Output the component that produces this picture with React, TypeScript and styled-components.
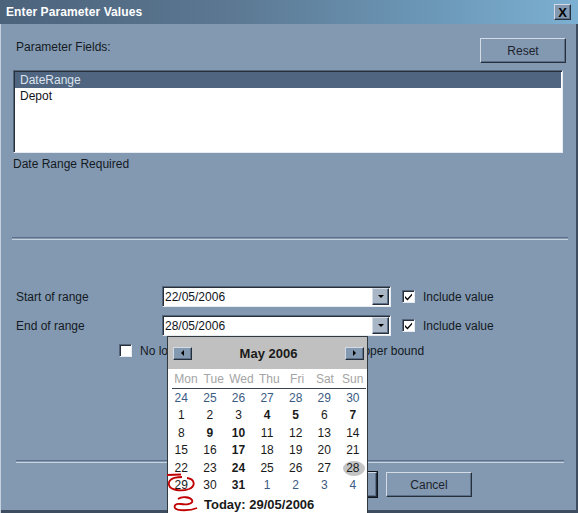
import React from 'react'
import styled, { createGlobalStyle, css } from 'styled-components'

const GlobalStyle = createGlobalStyle`
  html, body {
    margin: 0;
    padding: 0;
    background: #8399b2;
  }
  body {
    font-family: "Liberation Sans", Arial, sans-serif;
    font-size: 12px;
    color: #141a22;
  }
`

const bevel = css`
  border-style: solid;
  border-width: 1px;
  border-color: #d2dbe6 #26303c #26303c #d2dbe6;
  box-shadow: inset -1px -1px 0 #5d7087;
`

const sunken = css`
  border-style: solid;
  border-width: 1px;
  border-color: #56667a #e6ecf2 #e6ecf2 #56667a;
  box-shadow: inset 1px 1px 0 #26303c;
`

const Window = styled.div`
  width: 578px;
  height: 513px;
  box-sizing: border-box;
  background: #8399b2;
  box-shadow: inset 1px 0 0 #c5d1de, inset -2px -3px 0 #3e4d60;
  display: flex;
  flex-direction: column;
  overflow: hidden;
  position: relative;
`

const TitleBar = styled.div`
  height: 24px;
  flex: none;
  display: flex;
  align-items: center;
  justify-content: space-between;
  padding: 0 7px 0 6px;
  background: linear-gradient(to right, #4c637c 0%, #5c7892 40%, #6c98b8 75%, #7cb0d2 100%);
`

const Title = styled.span`
  color: #ffffff;
  font-weight: bold;
  font-size: 12px;
  letter-spacing: 0.1px;
`

const CloseButton = styled.div`
  ${bevel};
  width: 15px;
  height: 14px;
  background: #8399b2;
  display: flex;
  align-items: center;
  justify-content: center;
  font-weight: bold;
  font-size: 13px;
  color: #000;
  line-height: 1;
`

const TopRow = styled.div`
  display: flex;
  justify-content: space-between;
  align-items: flex-start;
  margin: 14px 12px 0 16px;
`

const Label = styled.span`
  padding-top: 2px;
  white-space: nowrap;
`

const Button = styled.div<{ $default?: boolean }>`
  ${bevel};
  width: 84px;
  height: 23px;
  display: flex;
  align-items: center;
  justify-content: center;
  background: #8399b2;
  color: #1d232c;
  font-size: 12px;
  ${p => p.$default && css`
    outline: 1px solid #10161e;
  `}
`

const ListBox = styled.div`
  ${sunken};
  height: 79px;
  margin: 7px 15px 0 13px;
  background: #ffffff;
  padding: 1px 1px;
`

const ListItem = styled.div<{ $selected?: boolean }>`
  height: 16px;
  line-height: 16px;
  padding-left: 5px;
  color: ${p => (p.$selected ? '#dce4ee' : '#10141a')};
  background: ${p => (p.$selected ? '#4f6580' : 'transparent')};
`

const Status = styled.div`
  margin: 4px 0 0 13px;
  height: 14px;
  line-height: 14px;
`

const Separator = styled.div<{ $top: number; $left: number; $right: number }>`
  margin: ${p => p.$top}px ${p => p.$right}px 0 ${p => p.$left}px;
  height: 1px;
  border-top: 1px solid #5b6f88;
  border-bottom: 1px solid #c6d2de;
  flex: none;
`

const RangeRow = styled.div<{ $top: number }>`
  display: flex;
  align-items: center;
  margin: ${p => p.$top}px 0 0 16px;
  height: 21px;
`

const RangeLabel = styled.span`
  width: 146px;
`

const Combo = styled.div`
  ${sunken};
  position: relative;
  width: 227px;
  height: 19px;
  background: #ffffff;
  display: flex;
  align-items: center;
  box-sizing: content-box;
`

const ComboText = styled.span`
  flex: 1;
  padding-left: 2px;
  color: #10141a;
`

const DropButton = styled.div`
  ${bevel};
  width: 15px;
  height: 15px;
  margin-right: 1px;
  background: #a9b6c6;
  display: flex;
  align-items: center;
  justify-content: center;
`

const CheckBox = styled.div<{ $gap: number }>`
  ${sunken};
  width: 11px;
  height: 11px;
  background: #ffffff;
  margin-left: ${p => p.$gap}px;
  display: flex;
  align-items: center;
  justify-content: center;
  flex: none;
`

const CheckLabel = styled.span`
  margin-left: 8px;
  white-space: nowrap;
`

const BoundRow = styled.div`
  display: flex;
  align-items: center;
  margin: 8px 0 0 104px;
  height: 13px;
`

const ButtonRow = styled.div`
  display: flex;
  gap: 9px;
  margin: 9px 0 0 291px;
`

const Popup = styled.div`
  position: absolute;
  top: 100%;
  left: 4px;
  margin-top: 1px;
  width: 199px;
  border: 1px solid #303840;
  background: #ffffff;
  z-index: 5;
  font-size: 12px;
`

const CalHeader = styled.div`
  height: 32px;
  background: #c0c0c0;
  display: flex;
  align-items: center;
  justify-content: space-between;
  padding: 0 3px 0 5px;
`

const NavButton = styled.div`
  ${bevel};
  width: 17px;
  height: 11px;
  background: #8399b2;
  display: flex;
  align-items: center;
  justify-content: center;
`

const MonthTitle = styled.span`
  font-weight: bold;
  font-size: 13px;
  color: #1a1a1a;
`

const DayGrid = styled.div`
  display: grid;
  grid-template-columns: repeat(7, 28.6px);
  margin-left: -1px;
`

const WeekDays = styled(DayGrid)`
  height: 19px;
  align-items: center;
  border-bottom: 1px solid #3a4450;
  margin: 0 1px 1px 4px;
  grid-template-columns: repeat(7, 27.8px);
`

const WeekDay = styled.span`
  text-align: center;
  color: #a4a4a4;
`

const Day = styled.span<{ $other?: boolean; $bold?: boolean; $selected?: boolean }>`
  height: 17.4px;
  line-height: 17.4px;
  text-align: center;
  position: relative;
  color: ${p => (p.$other ? '#3b5b82' : '#1a1a1a')};
  font-weight: ${p => (p.$bold ? 'bold' : 'normal')};
  ${p => p.$selected && css`
    &::before {
      content: '';
      position: absolute;
      left: 4px;
      right: 2px;
      top: 1px;
      bottom: 1px;
      border-radius: 50%;
      background: #c4c4c4;
      z-index: -1;
    }
  `}
`

const DayCells = styled(DayGrid)`
  position: relative;
  z-index: 0;
`

const Mark = styled.svg`
  position: absolute;
  pointer-events: none;
`

const TodayRow = styled.div`
  height: 22px;
  display: flex;
  align-items: center;
  padding: 0 0 2px 4px;
  box-sizing: border-box;
  gap: 5px;
  font-weight: bold;
  font-size: 13px;
  color: #1a1a1a;
`

const Check = () => (
  <svg width="9" height="9" viewBox="0 0 9 9">
    <path d="M1 4 L3.5 6.5 L8 1.5 L8 3.5 L3.5 8.5 L1 6 Z" fill="#000" />
  </svg>
)

const Triangle = ({ dir }: { dir: 'down' | 'left' | 'right' }) => {
  const d =
    dir === 'down' ? 'M0 0 L6 0 L3 3 Z' : dir === 'left' ? 'M3 0 L3 6 L0 3 Z' : 'M0 0 L0 6 L3 3 Z'
  const w = dir === 'down' ? 6 : 3
  const h = dir === 'down' ? 3 : 6
  return (
    <svg width={w} height={h} viewBox={`0 0 ${w} ${h}`}>
      <path d={d} fill="#000" />
    </svg>
  )
}

const weekDays = ['Mon', 'Tue', 'Wed', 'Thu', 'Fri', 'Sat', 'Sun']
const bolded = [4, 5, 7, 9, 10, 17, 24, 31]

const days: { n: number; other: boolean }[] = [
  ...[24, 25, 26, 27, 28, 29, 30].map(n => ({ n, other: true })),
  ...Array.from({ length: 31 }, (_, i) => ({ n: i + 1, other: false })),
  ...[1, 2, 3, 4].map(n => ({ n, other: true })),
]

const Calendar = () => (
  <Popup>
    <CalHeader>
      <NavButton><Triangle dir="left" /></NavButton>
      <MonthTitle>May 2006</MonthTitle>
      <NavButton><Triangle dir="right" /></NavButton>
    </CalHeader>
    <WeekDays>
      {weekDays.map(d => <WeekDay key={d}>{d}</WeekDay>)}
    </WeekDays>
    <DayCells>
      {days.map((d, i) => (
        <Day
          key={i}
          $other={d.other}
          $bold={!d.other && bolded.includes(d.n)}
          $selected={!d.other && d.n === 28}
        >
          {d.n}
        </Day>
      ))}
      <Mark width="32" height="22" viewBox="0 0 32 22" style={{ left: 0, top: 83 }}>
        <path
          d="M0 2 L14 1.5 M15 4 C4 4 1 8 2 12 C3 17 14 19 22 16 C29 13 28 6 20 5"
          fill="none"
          stroke="#c00000"
          strokeWidth="1.8"
        />
      </Mark>
    </DayCells>
    <TodayRow>
      <svg width="27" height="16" viewBox="0 0 27 16">
        <path
          d="M6 3 C10 0 18 1 20 4 C22 8 14 9 9 8 C3 7 2 10 3 12 C5 15 18 15 25 12"
          fill="none"
          stroke="#c00000"
          strokeWidth="1.8"
        />
      </svg>
      <span>Today: 29/05/2006</span>
    </TodayRow>
  </Popup>
)

const RangeField = ({ label, value, top, open }: { label: string; value: string; top: number; open?: boolean }) => (
  <RangeRow $top={top}>
    <RangeLabel>{label}</RangeLabel>
    <Combo>
      <ComboText>{value}</ComboText>
      <DropButton><Triangle dir="down" /></DropButton>
      {open && <Calendar />}
    </Combo>
    <CheckBox $gap={11}><Check /></CheckBox>
    <CheckLabel>Include value</CheckLabel>
  </RangeRow>
)

export default function App() {
  return (
    <>
      <GlobalStyle />
      <Window>
        <TitleBar>
          <Title>Enter Parameter Values</Title>
          <CloseButton>X</CloseButton>
        </TitleBar>
        <TopRow>
          <Label>Parameter Fields:</Label>
          <Button>Reset</Button>
        </TopRow>
        <ListBox>
          <ListItem $selected>DateRange</ListItem>
          <ListItem>Depot</ListItem>
        </ListBox>
        <Status>Date Range Required</Status>
        <Separator $top={66} $left={12} $right={10} />
        <RangeField label="Start of range" value="22/05/2006" top={46} />
        <RangeField label="End of range" value="28/05/2006" top={8} open />
        <BoundRow>
          <CheckBox $gap={15} />
          <CheckLabel>No lower bound</CheckLabel>
          <CheckBox $gap={93} />
          <CheckLabel>No upper bound</CheckLabel>
        </BoundRow>
        <Separator $top={103} $left={16} $right={14} />
        <ButtonRow>
          <Button $default>OK</Button>
          <Button>Cancel</Button>
        </ButtonRow>
      </Window>
    </>
  )
}
